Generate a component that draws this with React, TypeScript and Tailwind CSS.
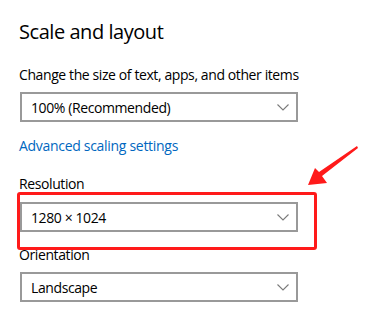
const Chevron = () => (
    <svg width="12" height="7" viewBox="0 0 12 7" fill="none">
        <polyline points="0.5,0.5 6,6 11.5,0.5" stroke="#7a7a7a" strokeWidth="1.1" />
    </svg>
);

const Dropdown = ({ value }: { value: string }) => (
    <div className="w-[278px] h-[30px] border-2 border-[#999999] bg-white flex items-center justify-between pl-[9px] pr-[7px] text-[14px] text-black">
        <span>{value}</span>
        <Chevron />
    </div>
);

export default function App() {
    return (
        <div
            className="relative w-[380px] h-[334px] bg-white overflow-hidden pl-[19px] tracking-[-0.4px]"
            style={{ fontFamily: '"Open Sans", "Noto Sans", sans-serif' }}
        >
            <h2 className="pt-[18px] text-[20px] leading-[28px] text-black tracking-[-0.45px]">Scale and layout</h2>
            <p className="mt-[19px] text-[14px] leading-[20px] text-black">
                Change the size of text, apps, and other items
            </p>
            <div className="mt-[7px] ml-[1px]">
                <Dropdown value="100% (Recommended)" />
            </div>
            <p className="mt-[14px] text-[14px] leading-[20px] text-[#0067c0] tracking-[-0.3px]">
                Advanced scaling settings
            </p>
            <p className="mt-[18px] text-[14px] leading-[20px] text-black">Resolution</p>
            <div className="relative mt-[8px] ml-[1px]">
                <Dropdown value="1280 × 1024" />
                {/* annotation box */}
                <div className="absolute left-[-3px] top-[-10px] w-[300px] h-[58px] border-[3px] border-[#ff1a1a] rounded-[3px]" />
            </div>
            <p className="mt-[13px] text-[14px] leading-[20px] text-black">Orientation</p>
            <div className="mt-[7px] ml-[1px]">
                <Dropdown value="Landscape" />
            </div>

            {/* arrow */}
            <svg className="absolute left-0 top-0" width="380" height="334" viewBox="0 0 380 334">
                <polygon
                    points="357,146 358,148 322,176 327,183 308,185 315,168 319,172"
                    fill="#ff1a1a"
                />
            </svg>
        </div>
    );
}
